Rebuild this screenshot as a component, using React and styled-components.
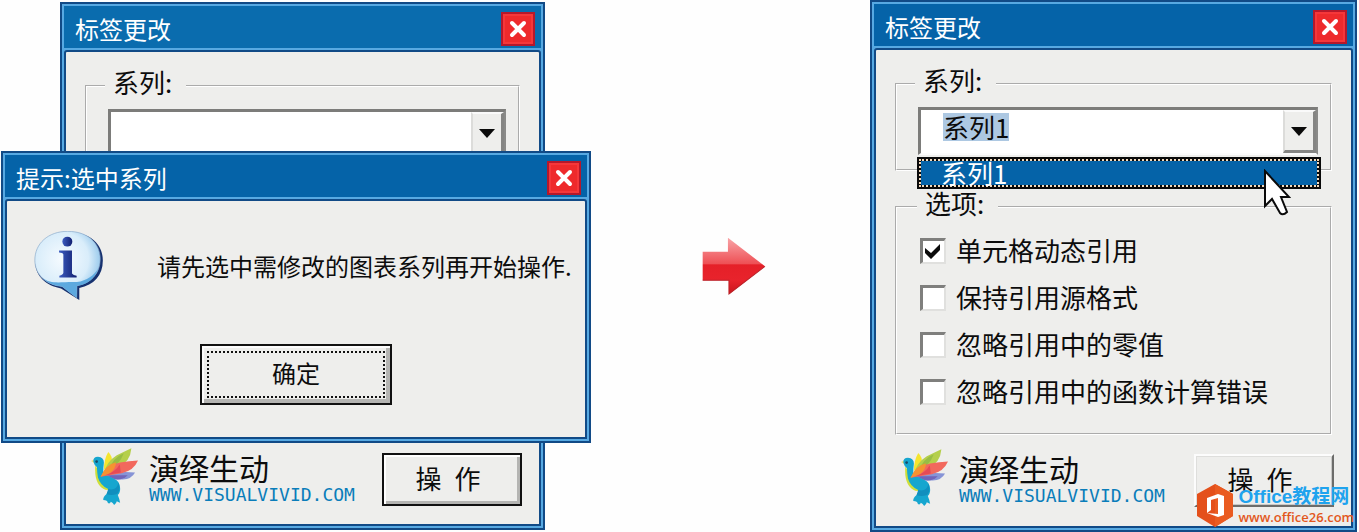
import React from 'react';
import styled, { createGlobalStyle, css } from 'styled-components';

const GlobalStyle = createGlobalStyle`
  * { box-sizing: border-box; }
  body {
    margin: 0;
    background: #fefefe;
    color: #0c0c0c;
    font-family: "Noto Sans CJK SC", "Liberation Sans", sans-serif;
    font-size: 26px;
  }
  button, select, input { font: inherit; color: inherit; }
`;

const Page = styled.main`
  display: grid;
  grid-template-columns: 591fr 279fr 487fr;
  padding-right: 2px;
  overflow: hidden;
`;

const Scene = styled.section`
  position: relative;
  display: flex;
  padding: 2px 46px 2px 60px;
`;

const ArrowCell = styled.div`
  display: flex;
  align-items: center;
  justify-content: center;
  padding-left: 6px;
`;

const Frame = styled.section`
  position: relative;
  flex: 1;
  display: flex;
  flex-direction: column;
  gap: 2px;
  padding: 2px;
  border: 2px solid #114a86;
  background: #57a9e2;
  ${p => p.$floating && css`
    position: absolute;
    top: 151px;
    left: 1px;
    right: 0;
  `}
`;

const TitleBar = styled.header`
  display: flex;
  align-items: center;
  justify-content: space-between;
  height: 42px;
  padding: 4px 6px 0 11px;
  background: ${p => (p.$muted ? '#0a6cae' : '#0563a8')};
  color: #fff;
`;

const Title = styled.h1`
  margin: 0;
  font-size: 24px;
  font-weight: 400;
  line-height: 34px;
`;

const CloseButton = styled.button`
  display: flex;
  align-items: center;
  justify-content: center;
  width: 34px;
  height: 34px;
  padding: 0;
  border: 2px solid #b5182b;
  background: #ee2a2c;
  box-shadow: inset 0 0 0 2px #f5373a;
`;

const Body = styled.div`
  flex: 1;
  display: flex;
  flex-direction: column;
  border: 2px solid #114a86;
  border-radius: 3px 3px 0 0;
  background: #eeeeec;
`;

const Group = styled.fieldset`
  min-width: 0;
  margin: ${p => p.$top}px 19px 0;
  padding: ${p => (p.$options ? '14px 12px 25px 23px' : '9px 12px 14px 21px')};
  border: 2px groove #fff;
`;

const Legend = styled.legend`
  margin-left: -3px;
  padding: 0 14px 8px 8px;
  line-height: 20px;
`;

const Combo = styled.div`
  position: relative;
  display: flex;
  height: 48px;
  border: solid;
  border-width: 3px 2px 2px 3px;
  border-color: #7c7c7a #8a8a88 #fbfbfb #7c7c7a;
  background: #fff;
`;

const ComboField = styled.div`
  flex: 1;
  display: flex;
  align-items: flex-start;
  padding: 3px 0 0 22px;
`;

const Select = styled.select`
  appearance: none;
  height: 28px;
  padding: 0;
  border: 0;
  outline: 0;
  line-height: 28px;
  ${p => (p.$selected
    ? css`field-sizing: content; background: #adc8e2;`
    : css`flex: 1; background: transparent;`)}
`;

const ComboArrow = styled.span`
  display: flex;
  align-items: center;
  justify-content: center;
  width: 33px;
  border: solid;
  border-width: 2px 3px 3px 2px;
  border-color: #fafafa #858583 #858583 #dcdcda;
  background: #eeeeec;
`;

const List = styled.ul`
  position: absolute;
  z-index: 1;
  top: 47px;
  left: -4px;
  right: -5px;
  margin: 0;
  padding: 0;
  border: 2px solid #0a0a0a;
  list-style: none;
`;

const Item = styled.li`
  height: 28px;
  padding-left: 20px;
  border: 2px dotted #f3dcc0;
  background: linear-gradient(#0563a8, #0563a8) padding-box, #0a0a0a border-box;
  color: #fff;
  line-height: 24px;
`;

const Pointer = styled.svg`
  position: absolute;
  z-index: 2;
  top: 59px;
  right: 25px;
`;

const Options = styled.div`
  display: flex;
  flex-direction: column;
  gap: 15px;
`;

const Option = styled.label`
  display: flex;
  align-items: center;
  gap: 10px;
  line-height: 32px;
  white-space: nowrap;
`;

const OptionText = styled.span`
  padding-bottom: 2px;
  line-height: 30px;
`;

const Check = styled.input`
  appearance: none;
  flex: none;
  width: 26px;
  height: 26px;
  margin: 0;
  border: solid;
  border-width: 3px 2px 2px 3px;
  border-color: #7f7f7d #e0e0de #e0e0de #7f7f7d;
  background: #fff;
  &:checked {
    background: #fff url("data:image/svg+xml,%3Csvg xmlns='http://www.w3.org/2000/svg' viewBox='0 0 21 21'%3E%3Cpath d='M2 7l6 5 9-9v6l-9 9-6-6z' fill='%230a0a0a'/%3E%3C/svg%3E") center / 21px no-repeat;
  }
`;

const Footer = styled.footer`
  display: flex;
  justify-content: space-between;
  height: 58px;
  margin-top: auto;
  padding: 0 17px 0 25px;
`;

const FooterSpace = styled.div`
  flex: none;
  height: ${p => p.$h}px;
`;

const Brand = styled.div`
  display: flex;
  align-items: flex-start;
  gap: 11px;
`;

const BrandText = styled.div`
  display: flex;
  flex-direction: column;
  padding-top: 2px;
`;

const BrandName = styled.strong`
  font-size: 30px;
  font-weight: 400;
  line-height: 34px;
`;

const BrandLink = styled.a`
  color: #0a7dba;
  font-family: "DejaVu Sans Mono", monospace;
  font-size: 18px;
  line-height: 22px;
  text-decoration: none;
`;

const ActionButton = styled.button`
  align-self: flex-end;
  width: 140px;
  height: 53px;
  padding: 0 8px 4px 0;
  background: #eeeeec;
  line-height: 30px;
  ${p => (p.$default
    ? css`
      border: 2px solid #111;
      box-shadow: inset 2px 2px #fff, inset -3px -3px #b4b4b2;
    `
    : css`
      border: 2px solid;
      border-color: #fcfcfc #6c6c6a #6c6c6a #fcfcfc;
      box-shadow: inset 1px 1px #dededc, inset -1px -1px #c8c8c6;
    `)}
`;

const Message = styled.div`
  display: flex;
  align-items: center;
  gap: 54px;
  padding: 30px 12px 44px 27px;
`;

const MessageText = styled.p`
  margin: 0;
  font-size: 24px;
  line-height: 32px;
  white-space: nowrap;
`;

const ConfirmButton = styled.button`
  align-self: center;
  width: 192px;
  height: 61px;
  margin-bottom: 32px;
  padding: 5px;
  border: 2px solid #111;
  background: #eeeeec;
  box-shadow: inset 2px 2px #fcfcfc, inset -4px -4px #b4b4b2;
  font-size: 24px;
`;

const Focus = styled.span`
  display: flex;
  align-items: center;
  justify-content: center;
  height: 100%;
  padding-bottom: 4px;
  border: 2px dotted #111;
`;

const Watermark = styled.aside`
  position: absolute;
  right: 1px;
  bottom: 3px;
  display: flex;
  align-items: center;
  gap: 6px;
`;

const WatermarkText = styled.div`
  display: flex;
  flex-direction: column;
`;

const WatermarkName = styled.strong`
  color: #1fa3ee;
  font-family: "Liberation Sans", "Noto Sans CJK SC", sans-serif;
  font-size: 19px;
  font-weight: 700;
  line-height: 22px;
`;

const WatermarkLink = styled.a`
  color: #e2571c;
  font-family: "Open Sans", sans-serif;
  font-size: 13px;
  font-weight: 600;
  line-height: 18px;
  text-decoration: none;
`;

function Close() {
  return (
    <CloseButton aria-label="关闭">
      <svg width="18" height="18" viewBox="0 0 18 18" aria-hidden="true">
        <path d="M3 3L15 15M15 3L3 15" stroke="#fff" strokeWidth="4" strokeLinecap="round" />
      </svg>
    </CloseButton>
  );
}

function Window({ title, floating, muted, children }) {
  return (
    <Frame $floating={floating}>
      <TitleBar $muted={muted}>
        <Title>{title}</Title>
        <Close />
      </TitleBar>
      <Body>{children}</Body>
    </Frame>
  );
}

function Triangle() {
  return (
    <ComboArrow aria-hidden="true">
      <svg width="16" height="9" viewBox="0 0 16 9"><path d="M0 0H16L8 9Z" fill="#0a0a0a" /></svg>
    </ComboArrow>
  );
}

function Bird() {
  return (
    <svg width="47" height="57" viewBox="129 50 142 172" aria-hidden="true">
      <path d="M181 62Q196 76 190 91L168 116Q168 84 181 62Z" fill="#f5e52e" />
      <path d="M251 51Q248 92 211 108L166 131Q174 92 207 72Q232 60 251 51Z" fill="#b5cf4b" />
      <path d="M228 66Q213 72 199 86L181 113Q215 103 228 66Z" fill="#98bd45" />
      <path d="M262 124Q252 144 225 145L190 145L168 131Q215 118 262 124Z" fill="#8794d6" />
      <path d="M240 132Q220 150 197 143L176 132Z" fill="#7165b9" />
      <path d="M142 103Q138 157 166 173Q181 181 190 171L151 116Z" fill="#cfdf3a" />
      <path d="M129 89L142 83L143 98Z" fill="#f4df74" />
      <path d="M136 91Q135 76 150 76Q168 77 168 94Q166 108 166 128L197 142Q216 149 217 171Q218 185 210 192Q215 204 217 215Q211 214 207 211Q205 219 199 222Q195 215 189 212Q186 220 180 216Q179 207 166 207Q165 198 176 189Q183 181 181 174Q157 163 150 139Q147 121 147 108Q138 101 136 91Z" fill="#16a6cf" />
      <path d="M181 174Q207 180 212 154Q220 183 205 190Q191 194 176 190Z" fill="#118fbe" />
      <path d="M271 88Q258 119 222 126L158 137Q172 102 217 94Q244 89 271 88Z" fill="#f2685d" />
      <path d="M204 93Q174 99 158 137L185 127Q206 111 204 93Z" fill="#f59331" />
      <path d="M216 99Q202 123 173 132L219 124Z" fill="#e54a56" />
      <circle cx="146" cy="91" r="4" fill="#164b68" />
    </svg>
  );
}

function InfoIcon() {
  return (
    <svg width="69" height="69" viewBox="101 62 207 208" aria-hidden="true">
      <defs>
        <radialGradient id="bubble" cx=".42" cy=".42" r=".62">
          <stop offset="0" stopColor="#f6fbff" />
          <stop offset=".65" stopColor="#d9edfa" />
          <stop offset="1" stopColor="#8fc4ea" />
        </radialGradient>
        <linearGradient id="letter" x2="1">
          <stop offset="0" stopColor="#3c5cc0" />
          <stop offset="1" stopColor="#111f70" />
        </linearGradient>
      </defs>
      <path d="M206 66C269 66 308 101 308 151C308 197 281 224 237 234V270L182 235C137 228 106 199 104 158Z" fill="#16316f" />
      <path d="M202 63C262 63 300 98 300 147C300 191 271 220 230 227L229 263L185 229C137 225 103 193 103 150C103 100 143 63 202 63Z" fill="url(#bubble)" stroke="#8aa9c9" strokeWidth="2" />
      <path d="M125 203C153 225 185 214 230 216C260 211 282 196 294 174C285 207 258 224 230 227L229 263L185 229C160 228 137 216 125 203Z" fill="#5da9df" />
      <circle cx="201" cy="94" r="15" fill="url(#letter)" />
      <path d="M176 121H215V190Q219 195 229 197V202H177V197Q188 194 189 188V133Q187 127 176 127Z" fill="url(#letter)" />
    </svg>
  );
}

function RedArrow() {
  return (
    <svg width="64" height="58" viewBox="37 42 190 172" aria-hidden="true">
      <defs>
        <linearGradient id="arrow" x2="0" y2="1">
          <stop offset="0" stopColor="#f9a5a8" />
          <stop offset=".46" stopColor="#ee5055" />
          <stop offset=".48" stopColor="#e52028" />
          <stop offset=".75" stopColor="#e8232c" />
          <stop offset="1" stopColor="#c9141c" />
        </linearGradient>
      </defs>
      <path d="M114 44L224 129L117 212V170H39V86H114Z" fill="url(#arrow)" />
      <path d="M224 129L117 211V170H39" fill="none" stroke="#bb2228" strokeWidth="3" />
    </svg>
  );
}

function BottomBar({ isDefault, space }) {
  return (
    <>
      <Footer>
        <Brand>
          <Bird />
          <BrandText>
            <BrandName>演绎生动</BrandName>
            <BrandLink href="#visualvivid">WWW.VISUALVIVID.COM</BrandLink>
          </BrandText>
        </Brand>
        <ActionButton $default={isDefault}>操&ensp;作</ActionButton>
      </Footer>
      <FooterSpace $h={space} />
    </>
  );
}

const OPTIONS = ['单元格动态引用', '保持引用源格式', '忽略引用中的零值', '忽略引用中的函数计算错误'];

export default function App() {
  return (
    <>
      <GlobalStyle />
      <Page>
        <Scene>
          <Window title="标签更改" muted>
            <Group $top={20}>
              <Legend>系列:</Legend>
              <Combo>
                <ComboField>
                  <Select aria-label="系列" defaultValue=""><option value="" /></Select>
                </ComboField>
                <Triangle />
              </Combo>
            </Group>
            <BottomBar isDefault space={18} />
          </Window>
          <Window title="提示:选中系列" floating>
            <Message>
              <InfoIcon />
              <MessageText>请先选中需修改的图表系列再开始操作.</MessageText>
            </Message>
            <ConfirmButton><Focus>确定</Focus></ConfirmButton>
          </Window>
        </Scene>

        <ArrowCell><RedArrow /></ArrowCell>

        <Window title="标签更改">
          <Group $top={20}>
            <Legend>系列:</Legend>
            <Combo>
              <ComboField>
                <Select aria-label="系列" $selected><option>系列1</option></Select>
              </ComboField>
              <Triangle />
              <List role="listbox" aria-label="系列">
                <Item role="option" aria-selected="true">系列1</Item>
              </List>
              <Pointer width="28" height="48" viewBox="0 0 28 48" aria-hidden="true">
                <path d="M2 2V37L9 30L17 44Q20 47 24 43L18 28H26Z" fill="#fff" stroke="#0a0a0a" strokeWidth="2" />
              </Pointer>
            </Combo>
          </Group>
          <Group $top={22} $options>
            <Legend>选项:</Legend>
            <Options>
              {OPTIONS.map((text, i) => (
                <Option key={text}>
                  <Check type="checkbox" defaultChecked={i === 0} />
                  <OptionText>{text}</OptionText>
                </Option>
              ))}
            </Options>
          </Group>
          <FooterSpace $h={14} />
          <BottomBar space={19} />
          <Watermark>
            <svg width="36" height="43" viewBox="0 0 36 43" aria-hidden="true">
              <path d="M18 0L36 10V32L18 43L0 32V10Z" fill="#e4501b" />
              <path d="M18 0L36 10V32L18 43Z" fill="#ea5b20" />
              <path d="M10 14L21 10L27 12V31L21 33L10 29L21 30V14L14 16V26L10 29Z" fill="#fff" />
            </svg>
            <WatermarkText>
              <WatermarkName>Office教程网</WatermarkName>
              <WatermarkLink href="#office26">www.office26.com</WatermarkLink>
            </WatermarkText>
          </Watermark>
        </Window>
      </Page>
    </>
  );
}
